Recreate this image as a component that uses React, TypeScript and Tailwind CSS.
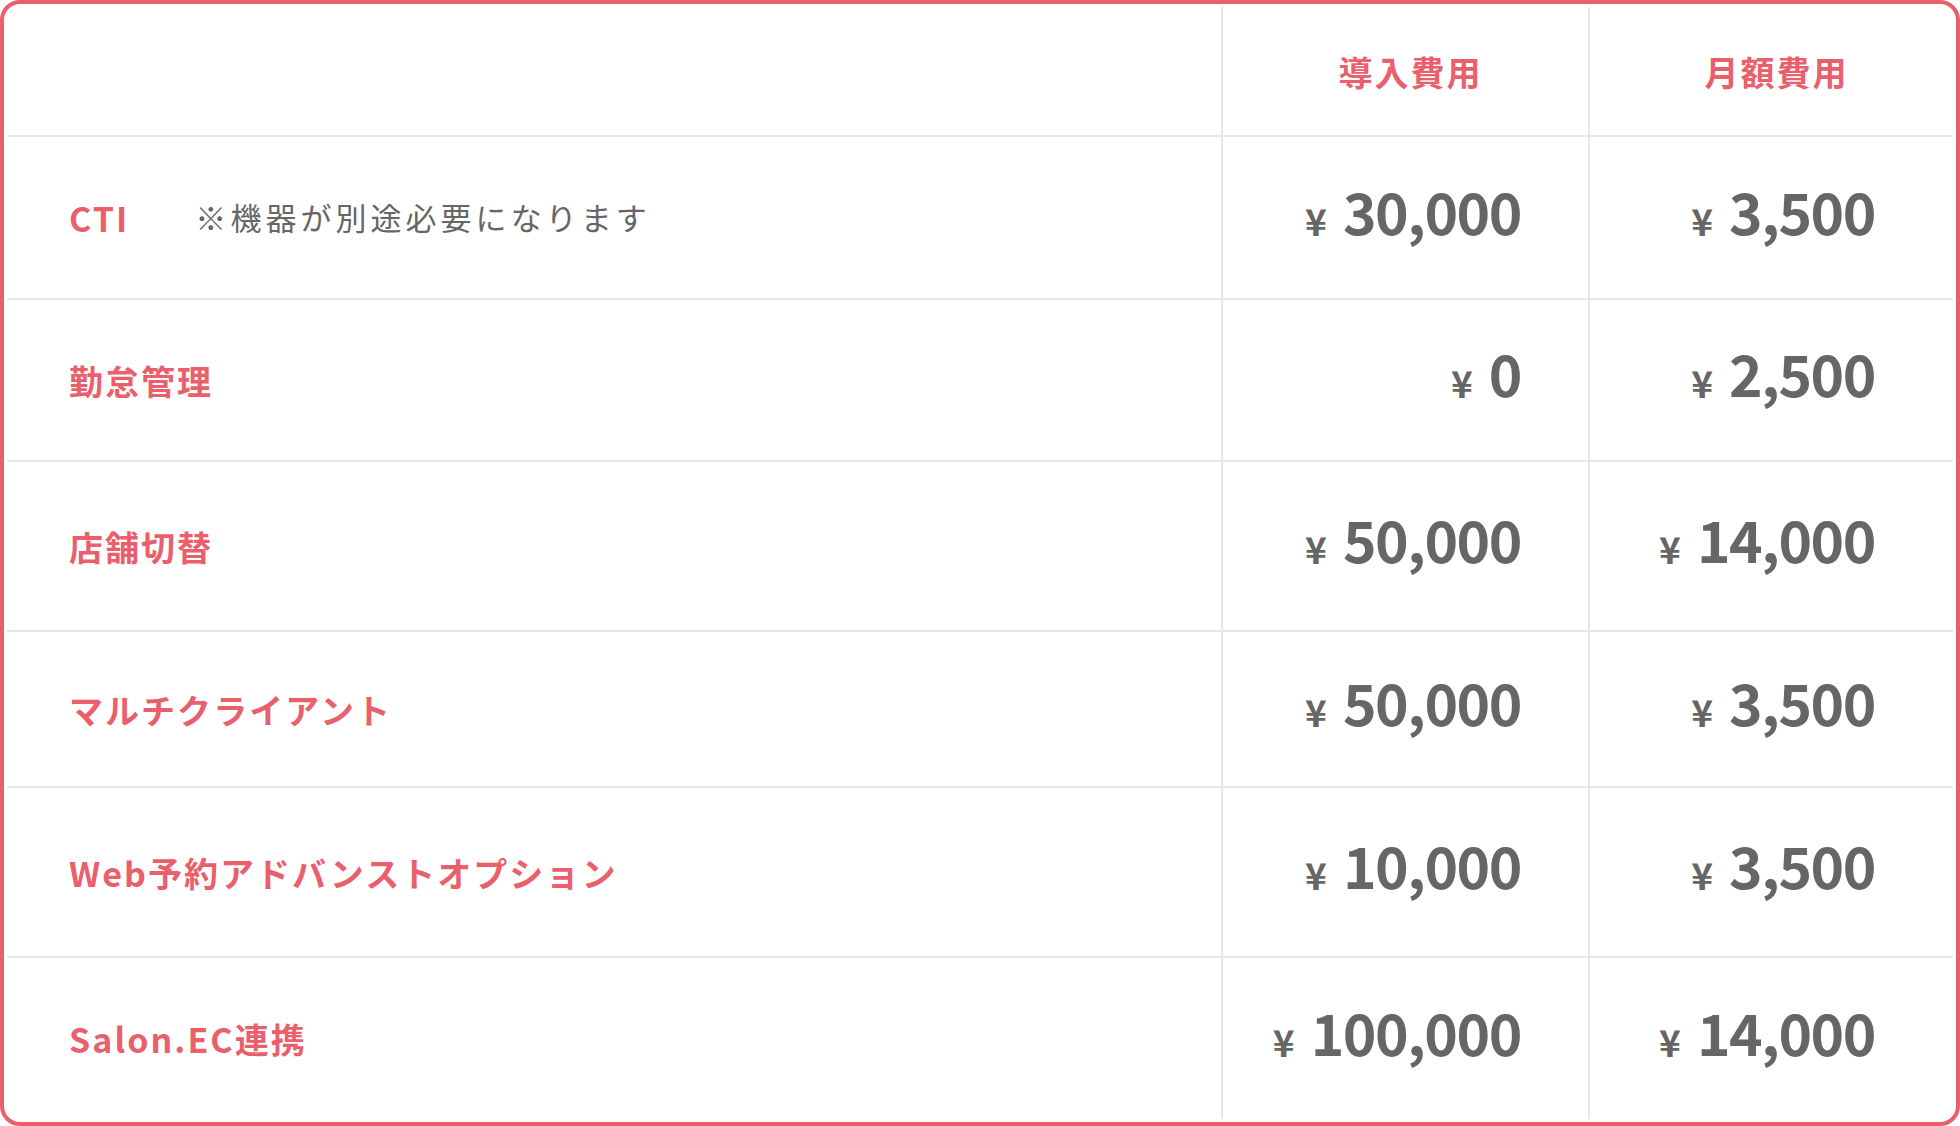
const rows = [
  { label: 'CTI', note: '※機器が別途必要になります', init: '30,000', monthly: '3,500', h: 'h-[163px]' },
  { label: '勤怠管理', init: '0', monthly: '2,500', h: 'h-[162px]' },
  { label: '店舗切替', init: '50,000', monthly: '14,000', h: 'h-[170px]' },
  { label: 'マルチクライアント', init: '50,000', monthly: '3,500', h: 'h-[156px]' },
  { label: 'Web予約アドバンストオプション', init: '10,000', monthly: '3,500', h: 'h-[170px]' },
  { label: 'Salon.EC連携', init: '100,000', monthly: '14,000', h: 'h-[161px]', last: true },
];

function Price({ value }: { value: string }) {
  return (
    <span className="flex items-baseline text-[#666666] font-bold">
      <span className="text-[37px] mr-[16px] relative -top-[2px]">¥</span>
      <span className="text-[57px] leading-none tracking-[-0.025em] relative -top-[3px]">{value}</span>
    </span>
  );
}

export default function App() {
  return (
    <div
      className="w-[1960px] h-[1126px] bg-white border-4 border-[#ea5f6c] rounded-[20px] p-[3px]"
      style={{ fontFamily: '"Noto Sans CJK JP", "Noto Sans", sans-serif' }}
    >
      <div className="flex flex-col">
        {/* header */}
        <div className="grid grid-cols-[1214px_367px_1fr] h-[130px] border-b-2 border-[#e6e6e6]">
          <div />
          <div className="flex items-center justify-center pl-[10px] border-l-2 border-[#e6e6e6] text-[34px] font-bold tracking-[0.06em] text-[#ea5f6c]">
            導入費用
          </div>
          <div className="flex items-center justify-center pl-[10px] border-l-2 border-[#e6e6e6] text-[34px] font-bold tracking-[0.06em] text-[#ea5f6c]">
            月額費用
          </div>
        </div>

        {rows.map((r) => (
          <div
            key={r.label}
            className={`grid grid-cols-[1214px_367px_1fr] ${r.h} ${r.last ? '' : 'border-b-2 border-[#e6e6e6]'}`}
          >
            <div className="flex items-center pl-[62px]">
              <span className="text-[34px] font-bold tracking-[0.06em] text-[#ea5f6c]">{r.label}</span>
              {r.note && (
                <span className="ml-[66px] text-[31px] tracking-[0.13em] text-[#666666]">{r.note}</span>
              )}
            </div>
            <div className="flex items-center justify-end pr-[67px] border-l-2 border-[#e6e6e6]">
              <Price value={r.init} />
            </div>
            <div className="flex items-center justify-end pr-[78px] border-l-2 border-[#e6e6e6]">
              <Price value={r.monthly} />
            </div>
          </div>
        ))}
      </div>
    </div>
  );
}
